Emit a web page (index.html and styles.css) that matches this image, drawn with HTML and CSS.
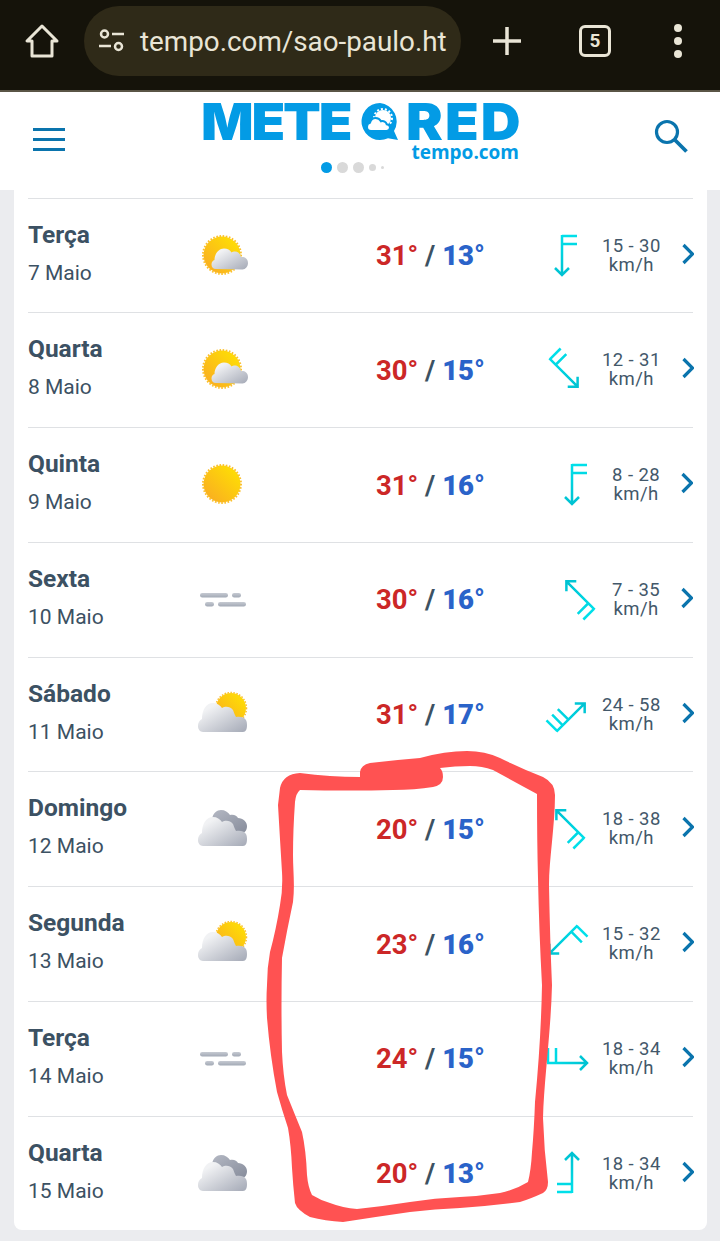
FILE: index.html
```html
<!DOCTYPE html>
<html lang="pt">
<head>
    <meta charset="UTF-8">
    <title>Tempo em São Paulo</title>
    <link rel="stylesheet" href="styles.css">
</head>
<body>
    <svg class="defs" width="0" height="0">
        <defs>
            <linearGradient id="sunfill" x1="1" y1="0" x2="0" y2="1">
                <stop offset="0" stop-color="#ffe500"/>
                <stop offset="1" stop-color="#f9a825"/>
            </linearGradient>
            <linearGradient id="cloudfill" x1="0" y1="0" x2="1" y2="1">
                <stop offset="0.2" stop-color="#f1f2f4"/>
                <stop offset="1" stop-color="#a4a9b6"/>
            </linearGradient>
            <linearGradient id="backcloud" x1="0" y1="0" x2="1" y2="1">
                <stop offset="0" stop-color="#b4b8c3"/>
                <stop offset="1" stop-color="#868c9b"/>
            </linearGradient>
            <linearGradient id="fogfill" x1="0" y1="0" x2="0" y2="1">
                <stop offset="0" stop-color="#c6cad2"/>
                <stop offset="1" stop-color="#a2a9b5"/>
            </linearGradient>
            <linearGradient id="windline" gradientUnits="userSpaceOnUse" x1="19" y1="4" x2="19" y2="44">
                <stop offset="0" stop-color="#00e0ea"/>
                <stop offset="1" stop-color="#00c2d2"/>
            </linearGradient>
            <symbol id="sun" viewBox="0 0 48 48">
                <circle cx="22" cy="23" r="18.500" fill="url(#sunfill)"/>
                <circle cx="22" cy="23" r="19" fill="none" stroke="#fbc02d" stroke-width="2" stroke-dasharray="1.600 1.600"/>
            </symbol>
            <symbol id="smallcloud" viewBox="0 0 48 48">
                <path d="M16 37c-3 0-4.500-2-4.500-4.500 0-2.500 1.500-4 3-4.500 0-6 4-11.500 9.500-11.500 3.500 0 6 1.500 7.500 4 1-.8 2-1 3.500-1 3 0 5.500 2.500 6 5.500 3-.5 7 1 7 6 0 3.500-2.500 6.500-5.500 6.500z" fill="url(#cloudfill)"/>
            </symbol>
            <symbol id="bigcloud" viewBox="0 0 48 48">
                <path d="M3 41C0 41-2 38-2 35.500C-2 31 0 29 2 28C2 19 6 12 13 12C17 12 20 14 22 17C25 15 30 15 33 19C34 22 35 24 36 26C38 25.500 41 25.500 43 26.500C46 28 47 30 47 34C47 38 46 41 43 41Z" fill="url(#cloudfill)"/>
            </symbol>
            <symbol id="partly" viewBox="0 0 48 48">
                <circle cx="31" cy="17" r="15" fill="url(#sunfill)"/>
                <circle cx="31" cy="17" r="15.500" fill="none" stroke="#fbc02d" stroke-width="1.500" stroke-dasharray="1.500 1.500"/>
                <use href="#bigcloud"/>
            </symbol>
            <symbol id="cloudy" viewBox="0 0 48 48">
                <path d="M12 14C13 8 17 5 21 5C25 5 28 7 30 10C34 9 37 11 38 13C43 13 47 17 47 21C47 25 45 28 42 28L20 28Z" fill="url(#backcloud)"/>
                <use href="#bigcloud"/>
            </symbol>
            <symbol id="fog" viewBox="0 0 48 48">
                <g fill="url(#fogfill)">
                    <rect x="0" y="17" width="28" height="4.500" rx="2.200"/>
                    <rect x="32" y="17" width="9" height="4.500" rx="2.200"/>
                    <rect x="5" y="26" width="9" height="4.500" rx="2.200"/>
                    <rect x="18" y="26" width="28" height="4.500" rx="2.200"/>
                </g>
            </symbol>
            <symbol id="wind2" viewBox="0 0 48 48">
                <path d="M19 4v40M12 37l7 7 7-7M19 5h15M19 13h15" fill="none" stroke="url(#windline)" stroke-width="2.500"/>
            </symbol>
            <symbol id="wind3" viewBox="0 0 48 48">
                <path d="M19 4v40M12 37l7 7 7-7M19 5h15M19 13h15M19 21h15" fill="none" stroke="url(#windline)" stroke-width="2.500"/>
            </symbol>
        </defs>
    </svg>

    <div class="toolbar">
        <svg class="home" width="36" height="36" viewBox="0 0 36 36">
            <path d="M18 3 3 18h5v15h20V18h5z" fill="none" stroke="#e9e5d6" stroke-width="3" stroke-linejoin="round"/>
        </svg>
        <div class="urlbar">
            <svg class="tune" width="28" height="28" viewBox="0 0 28 28">
                <g fill="none" stroke="#e9e5d6" stroke-width="2.500">
                    <circle cx="6.500" cy="7" r="3.500"/>
                    <path d="M14 7h12M1 19h12"/>
                    <circle cx="20.500" cy="19.500" r="3.500"/>
                </g>
            </svg>
            <span class="url">tempo.com/sao-paulo.ht</span>
        </div>
        <svg class="plus" width="30" height="30" viewBox="0 0 30 30">
            <path d="M15 1v28M1 15h28" stroke="#e9e5d6" stroke-width="3.500"/>
        </svg>
        <div class="tabs">5</div>
        <div class="menu"><i></i><i></i><i></i></div>
    </div>

    <header class="site">
        <div class="burger"><i></i><i></i><i></i></div>
        <div class="brand">
            <div class="logo">
                <span class="logo-a">METE</span>
                <svg class="bubble" width="40" height="40" viewBox="0 0 40 40" role="img" aria-label="O">
                    <path d="M20 1a18.500 18.500 0 1 0 8 35.200L38 38l-4-9A18.500 18.500 0 0 0 20 1z" fill="#039be5"/>
                    <circle cx="23" cy="16" r="8" fill="#fff"/>
                    <circle cx="23" cy="16" r="9" fill="none" stroke="#fff" stroke-width="2" stroke-dasharray="2 2"/>
                    <path d="M11 29c-2.500 0-4-1.800-4-4s1.500-4 3-4.300c.8-3 3-4.700 5.500-4.700 2.700 0 4.500 1.300 5.500 3.300 2.700-.8 5 .5 5.700 3 1.800.2 3.300 1.700 3.300 3.300 0 2-1.500 3.400-3.500 3.400z" fill="#fff" stroke="#039be5" stroke-width="2"/>
                </svg>
                <span class="logo-b">RED</span>
            </div>
            <div class="logo-sub">tempo.com</div>
            <div class="dots"><i class="on"></i><i></i><i></i><i class="sm"></i><i class="xs"></i></div>
        </div>
        <svg class="search" width="36" height="36" viewBox="0 0 36 36">
            <circle cx="14" cy="14" r="10.500" fill="none" stroke="#0a74ad" stroke-width="3.200"/>
            <path d="M22 22l11.500 11.500" stroke="#0a74ad" stroke-width="3.800"/>
        </svg>
    </header>

    <main class="card">
        <a class="day">
            <div class="when"><b>Terça</b><span>7 Maio</span></div>
            <svg class="sky"><use href="#sun"/><use href="#smallcloud"/></svg>
            <div class="temp"><em>31°</em> / <strong>13°</strong></div>
            <div class="wind">
                <svg class="arrow" style="transform: rotate(0deg)"><use href="#wind2"/></svg>
                <div class="speed">15 - 30<br>km/h</div>
            </div>
            <svg class="chev" width="12" height="22" viewBox="0 0 12 22"><path d="M1.500 2l9 9-9 9" fill="none" stroke="#0a74ad" stroke-width="3.200"/></svg>
        </a>
        <a class="day">
            <div class="when"><b>Quarta</b><span>8 Maio</span></div>
            <svg class="sky"><use href="#sun"/><use href="#smallcloud"/></svg>
            <div class="temp"><em>30°</em> / <strong>15°</strong></div>
            <div class="wind">
                <svg class="arrow" style="transform: rotate(-45deg)"><use href="#wind2"/></svg>
                <div class="speed">12 - 31<br>km/h</div>
            </div>
            <svg class="chev" width="12" height="22" viewBox="0 0 12 22"><path d="M1.500 2l9 9-9 9" fill="none" stroke="#0a74ad" stroke-width="3.200"/></svg>
        </a>
        <a class="day">
            <div class="when"><b>Quinta</b><span>9 Maio</span></div>
            <svg class="sky"><use href="#sun"/></svg>
            <div class="temp"><em>31°</em> / <strong>16°</strong></div>
            <div class="wind">
                <svg class="arrow" style="transform: rotate(0deg)"><use href="#wind2"/></svg>
                <div class="speed">8 - 28<br>km/h</div>
            </div>
            <svg class="chev" width="12" height="22" viewBox="0 0 12 22"><path d="M1.500 2l9 9-9 9" fill="none" stroke="#0a74ad" stroke-width="3.200"/></svg>
        </a>
        <a class="day">
            <div class="when"><b>Sexta</b><span>10 Maio</span></div>
            <svg class="sky"><use href="#fog"/></svg>
            <div class="temp"><em>30°</em> / <strong>16°</strong></div>
            <div class="wind">
                <svg class="arrow" style="transform: rotate(135deg)"><use href="#wind2"/></svg>
                <div class="speed">7 - 35<br>km/h</div>
            </div>
            <svg class="chev" width="12" height="22" viewBox="0 0 12 22"><path d="M1.500 2l9 9-9 9" fill="none" stroke="#0a74ad" stroke-width="3.200"/></svg>
        </a>
        <a class="day">
            <div class="when"><b>Sábado</b><span>11 Maio</span></div>
            <svg class="sky"><use href="#partly"/></svg>
            <div class="temp"><em>31°</em> / <strong>17°</strong></div>
            <div class="wind">
                <svg class="arrow" style="transform: rotate(225deg)"><use href="#wind3"/></svg>
                <div class="speed">24 - 58<br>km/h</div>
            </div>
            <svg class="chev" width="12" height="22" viewBox="0 0 12 22"><path d="M1.500 2l9 9-9 9" fill="none" stroke="#0a74ad" stroke-width="3.200"/></svg>
        </a>
        <a class="day">
            <div class="when"><b>Domingo</b><span>12 Maio</span></div>
            <svg class="sky"><use href="#cloudy"/></svg>
            <div class="temp"><em>20°</em> / <strong>15°</strong></div>
            <div class="wind">
                <svg class="arrow" style="transform: rotate(135deg)"><use href="#wind2"/></svg>
                <div class="speed">18 - 38<br>km/h</div>
            </div>
            <svg class="chev" width="12" height="22" viewBox="0 0 12 22"><path d="M1.500 2l9 9-9 9" fill="none" stroke="#0a74ad" stroke-width="3.200"/></svg>
        </a>
        <a class="day">
            <div class="when"><b>Segunda</b><span>13 Maio</span></div>
            <svg class="sky"><use href="#partly"/></svg>
            <div class="temp"><em>23°</em> / <strong>16°</strong></div>
            <div class="wind">
                <svg class="arrow" style="transform: rotate(45deg)"><use href="#wind2"/></svg>
                <div class="speed">15 - 32<br>km/h</div>
            </div>
            <svg class="chev" width="12" height="22" viewBox="0 0 12 22"><path d="M1.500 2l9 9-9 9" fill="none" stroke="#0a74ad" stroke-width="3.200"/></svg>
        </a>
        <a class="day">
            <div class="when"><b>Terça</b><span>14 Maio</span></div>
            <svg class="sky"><use href="#fog"/></svg>
            <div class="temp"><em>24°</em> / <strong>15°</strong></div>
            <div class="wind">
                <svg class="arrow" style="transform: rotate(270deg)"><use href="#wind2"/></svg>
                <div class="speed">18 - 34<br>km/h</div>
            </div>
            <svg class="chev" width="12" height="22" viewBox="0 0 12 22"><path d="M1.500 2l9 9-9 9" fill="none" stroke="#0a74ad" stroke-width="3.200"/></svg>
        </a>
        <a class="day">
            <div class="when"><b>Quarta</b><span>15 Maio</span></div>
            <svg class="sky"><use href="#cloudy"/></svg>
            <div class="temp"><em>20°</em> / <strong>13°</strong></div>
            <div class="wind">
                <svg class="arrow" style="transform: rotate(180deg)"><use href="#wind2"/></svg>
                <div class="speed">18 - 34<br>km/h</div>
            </div>
            <svg class="chev" width="12" height="22" viewBox="0 0 12 22"><path d="M1.500 2l9 9-9 9" fill="none" stroke="#0a74ad" stroke-width="3.200"/></svg>
        </a>
    </main>

    <!-- hand drawn marker ring on top of the screenshot -->
    <svg class="scribble" width="720" height="1241" viewBox="0 0 720 1241">
        <path fill="#ff5252" fill-rule="evenodd" d="M280 788Q283 774 300 773Q330 777 360 777L360 772Q361 765 370 763Q395 760 420 758Q445 751 467 751Q485 751 500 758Q520 768 543 777Q555 783 555 795C555 825 549 860 549 885Q550 940 552 985C551 1030 544 1080 543 1118Q544 1150 548 1182Q548 1190 543 1193Q530 1199 520 1202Q490 1206 460 1208Q435 1209 410 1212Q375 1217 343 1222Q325 1221 310 1217Q297 1210 295 1203Q293 1185 292 1168Q291 1145 288 1128Q282 1110 277 1092Q270 1055 267 1018Q266 1000 267 985Q267 968 270 952Q276 930 280 905Q283 890 282 872Q280 840 278 805ZM300 790Q350 791 393 790Q415 790 433 787Q443 785 443 777Q443 771 440 768Q455 766 470 766Q482 766 493 770Q515 782 537 794Q537 840 538 878Q539 930 542 985Q541 1040 535 1102Q534 1130 532 1152Q531 1170 528 1182Q515 1190 500 1193Q480 1196 460 1197Q435 1198 410 1202Q385 1206 357 1209Q343 1208 330 1203Q320 1200 312 1195Q308 1187 307 1175Q306 1150 302 1132Q295 1115 287 1095Q283 1075 282 1052Q281 1005 282 958Q287 930 293 902C295 885 293 870 293 855Q293 830 295 802Q296 793 300 790Z"/>
    </svg>
</body>
</html>
```

FILE: styles.css
```css
html {
    font-family: Roboto, "Liberation Sans", sans-serif;
    color: #3c5163;
}
body {
    position: relative;
    height: 1241px;
    margin: 0;
    overflow: hidden;
    background: #ebecef;
}
.defs {
    position: absolute;
}
symbol {
    overflow: visible;
}

/* browser bar */
.toolbar {
    display: flex;
    align-items: center;
    height: 82px;
    padding: 0 0 8px 24px;
    background: #15130a;
    border-bottom: 2px solid #5a5546;
}
.home {
    flex: none;
}
.urlbar {
    display: flex;
    align-items: center;
    flex: none;
    box-sizing: border-box;
    width: 377px;
    height: 70px;
    margin-left: 24px;
    padding: 0 14px 0 14px;
    background: #2f2a18;
    border-radius: 35px;
}
.tune {
    flex: none;
    margin-right: 14px;
}
.url {
    white-space: nowrap;
    font-size: 27.800px;
    color: #e9e5d6;
}
.plus {
    flex: none;
    margin-left: 31px;
}
.tabs {
    flex: none;
    box-sizing: border-box;
    width: 32px;
    height: 32px;
    margin-left: 57px;
    border: 3px solid #e9e5d6;
    border-radius: 6px;
    font-size: 19px;
    font-weight: 700;
    line-height: 26px;
    text-align: center;
    color: #e9e5d6;
}
.menu {
    display: flex;
    flex-flow: column;
    gap: 5px;
    margin-left: 63px;
}
.menu i {
    width: 8px;
    height: 8px;
    border-radius: 50%;
    background: #e9e5d6;
}

/* site header */
.site {
    display: flex;
    align-items: flex-start;
    height: 98px;
    background: #fff;
}
.burger {
    display: flex;
    flex-flow: column;
    gap: 7px;
    width: 32px;
    margin: 36px 0 0 33px;
}
.burger i {
    height: 3px;
    background: #0a74ad;
}
.brand {
    display: flex;
    flex-flow: column;
    align-items: stretch;
    width: 318px;
    margin: 10px 0 0 136px;
}
.logo {
    display: flex;
    align-items: center;
    height: 40px;
    font-family: Inter, sans-serif;
    font-size: 51px;
    font-weight: 900;
    line-height: 40px;
    color: #039be5;
}
.logo-a {
    flex: none;
    width: 159px;
    letter-spacing: -2px;
    transform: scaleX(1.08);
    transform-origin: left center;
}
.bubble {
    flex: none;
}
.logo-b {
    flex: none;
    margin-left: 6px;
    letter-spacing: 2px;
    transform: scaleX(1.08);
    transform-origin: left center;
}
.logo-sub {
    margin-top: 2px;
    font-family: "Open Sans", sans-serif;
    font-size: 19px;
    font-weight: 700;
    line-height: 16px;
    text-align: right;
    color: #039be5;
}
.dots {
    display: flex;
    align-items: center;
    gap: 5px;
    margin: 0 0 0 120px;
    height: 14px;
}
.dots i {
    width: 11px;
    height: 11px;
    border-radius: 50%;
    background: #d9d9d9;
}
.dots .on {
    background: #039be5;
}
.dots .sm {
    width: 7px;
    height: 7px;
}
.dots .xs {
    width: 3px;
    height: 3px;
}
.search {
    margin: 26px 0 0 134px;
}

/* forecast list */
.card {
    width: 693px;
    box-sizing: border-box;
    height: 1040px;
    margin-left: 14px;
    padding: 7.700px 14px 0;
    background: #fff;
    border-radius: 0 0 8px 8px;
}
.day {
    display: flex;
    align-items: center;
    box-sizing: border-box;
    height: 114.750px;
    border-top: 1.400px solid #dfe1e4;
}
.when {
    display: flex;
    flex-flow: column;
    gap: 13px;
    width: 172px;
    flex: none;
    margin-top: -5px;
}
.when b {
    font-size: 24.500px;
    font-weight: 700;
    line-height: 26px;
}
.when span {
    font-size: 21px;
    line-height: 24px;
}
.sky {
    flex: none;
    width: 48px;
    height: 48px;
    overflow: visible;
}
.temp {
    flex: none;
    box-sizing: border-box;
    width: 295px;
    padding-left: 128px;
    font-size: 27.500px;
    font-weight: 700;
    white-space: nowrap;
}
.temp em {
    font-style: normal;
    color: #cc2727;
}
.temp strong {
    color: #2a63c9;
}
.wind {
    display: flex;
    flex: 1;
    align-items: center;
    justify-content: flex-end;
    margin-top: -2px;
}
.arrow {
    flex: none;
    width: 48px;
    height: 48px;
    margin-right: 11px;
}
.speed {
    margin-top: 2px;
    font-size: 18.500px;
    letter-spacing: 0.4px;
    line-height: 19px;
    text-align: center;
    white-space: nowrap;
    color: #43586a;
}
.chev {
    flex: none;
    margin: -4px 0 0 21px;
}
.scribble {
    position: absolute;
    top: 0;
    left: 0;
    pointer-events: none;
}
```
